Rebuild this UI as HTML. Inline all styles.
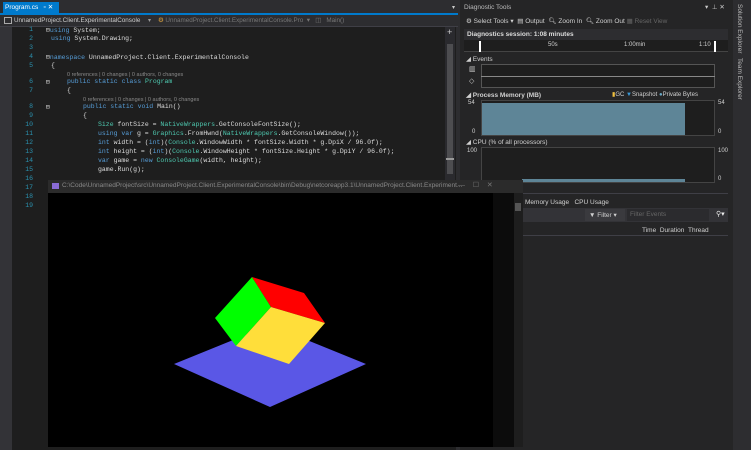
<!DOCTYPE html>
<html><head><style>
*{margin:0;padding:0;box-sizing:border-box}
body{width:751px;height:450px;background:#2d2d30;position:relative;overflow:hidden;font-family:"Liberation Sans",sans-serif;color:#d0d0d0}
.a{position:absolute;white-space:nowrap}
.code{font-family:"Liberation Mono",monospace;font-size:6.5px;color:#dcdcdc}
.ln{font-family:"Liberation Mono",monospace;font-size:6.5px;color:#2b91af;width:12px;text-align:right}
.k{color:#569cd6}.t{color:#4ec9b0}
.lens{font-size:5.5px;color:#8a8a8a}
.s{font-size:7px;color:#d0d0d0}
</style></head><body>
<div class="a" style="left:0;top:0;width:460px;height:14px;background:#2d2d30"></div>
<div class="a" style="left:3px;top:2px;width:56px;height:12px;background:#007acc"></div>
<div class="a s" style="left:5px;top:3px;color:#fff;font-size:6.5px">Program.cs &nbsp; ▫ ✕</div>
<div class="a" style="left:0;top:13px;width:458px;height:2px;background:#007acc"></div>
<div class="a" style="left:452px;top:4px;font-size:6px;color:#ccc">▾</div>
<div class="a" style="left:0;top:15px;width:458px;height:12px;background:#2d2d30;border-bottom:1px solid #3f3f46"></div>
<div class="a" style="left:4px;top:17px;width:8px;height:7px;border:1px solid #aaa"></div>
<div class="a s" style="left:14px;top:17px;font-size:6.3px;color:#ccc">UnnamedProject.Client.ExperimentalConsole</div>
<div class="a s" style="left:148px;top:17px;font-size:6px;color:#999">▾</div>
<div class="a s" style="left:158px;top:17px;font-size:6.3px;color:#777"><span style="color:#d8a040">⚙</span> UnnamedProject.Client.ExperimentalConsole.Pro &nbsp;▾ &nbsp; ◫ &nbsp; Main()</div>
<div class="a" style="left:0;top:27px;width:12px;height:423px;background:#333337"></div>
<div class="a" style="left:12px;top:27px;width:444px;height:423px;background:#1e1e1e"></div>
<div class="a" style="left:445px;top:27px;width:10px;height:165px;background:#2a2a2e"></div>
<div class="a" style="left:447px;top:44px;width:6px;height:130px;background:#4d4d50"></div>
<div class="a" style="left:446px;top:158px;width:8px;height:2px;background:#999"></div>
<div class="a" style="left:447px;top:27px;color:#ccc;font-size:9px">+</div>
<div class="a ln" style="left:21px;top:26px">1</div>
<div class="a ln" style="left:21px;top:35px">2</div>
<div class="a ln" style="left:21px;top:44px">3</div>
<div class="a ln" style="left:21px;top:53px">4</div>
<div class="a ln" style="left:21px;top:62px">5</div>
<div class="a ln" style="left:21px;top:78px">6</div>
<div class="a ln" style="left:21px;top:87px">7</div>
<div class="a ln" style="left:21px;top:103px">8</div>
<div class="a ln" style="left:21px;top:112px">9</div>
<div class="a ln" style="left:21px;top:121px">10</div>
<div class="a ln" style="left:21px;top:130px">11</div>
<div class="a ln" style="left:21px;top:139px">12</div>
<div class="a ln" style="left:21px;top:148px">13</div>
<div class="a ln" style="left:21px;top:157px">14</div>
<div class="a ln" style="left:21px;top:166px">15</div>
<div class="a ln" style="left:21px;top:175px">16</div>
<div class="a ln" style="left:21px;top:184px">17</div>
<div class="a ln" style="left:21px;top:193px">18</div>
<div class="a ln" style="left:21px;top:202px">19</div>
<div class="a code" style="left:46px;top:26px">⊟<span class="k">using</span> System;</div>
<div class="a code" style="left:51px;top:35px"><span class="k">using</span> System.Drawing;</div>
<div class="a code" style="left:46px;top:53px">⊟<span class="k">namespace</span> UnnamedProject.Client.ExperimentalConsole</div>
<div class="a code" style="left:51px;top:62px">{</div>
<div class="a lens" style="left:67px;top:72px">0 references | 0 changes | 0 authors, 0 changes</div>
<div class="a code" style="left:46px;top:78px">⊟</div>
<div class="a code" style="left:67px;top:78px"><span class="k">public static class</span> <span class="t">Program</span></div>
<div class="a code" style="left:67px;top:87px">{</div>
<div class="a lens" style="left:83px;top:97px">0 references | 0 changes | 0 authors, 0 changes</div>
<div class="a code" style="left:46px;top:103px">⊟</div>
<div class="a code" style="left:83px;top:103px"><span class="k">public static void</span> Main()</div>
<div class="a code" style="left:83px;top:112px">{</div>
<div class="a code" style="left:98px;top:121px"><span class="t">Size</span> fontSize = <span class="t">NativeWrappers</span>.GetConsoleFontSize();</div>
<div class="a code" style="left:98px;top:130px"><span class="k">using var</span> g = <span class="t">Graphics</span>.FromHwnd(<span class="t">NativeWrappers</span>.GetConsoleWindow());</div>
<div class="a code" style="left:98px;top:139px"><span class="k">int</span> width = (<span class="k">int</span>)(<span class="t">Console</span>.WindowWidth * fontSize.Width * g.DpiX / 96.0f);</div>
<div class="a code" style="left:98px;top:148px"><span class="k">int</span> height = (<span class="k">int</span>)(<span class="t">Console</span>.WindowHeight * fontSize.Height * g.DpiY / 96.0f);</div>
<div class="a code" style="left:98px;top:157px"><span class="k">var</span> game = <span class="k">new</span> <span class="t">ConsoleGame</span>(width, height);</div>
<div class="a code" style="left:98px;top:166px">game.Run(g);</div>
<div class="a" style="left:460px;top:0;width:273px;height:450px;background:#252526"></div>
<div class="a s" style="left:464px;top:4px;font-size:6.5px;color:#bbb">Diagnostic Tools</div>
<div class="a s" style="left:705px;top:3px;font-size:6.5px;color:#ccc">▾ &nbsp;⊥ ✕</div>
<div class="a s" style="left:466px;top:17px;font-size:6.5px">⚙ Select Tools ▾ &nbsp;<span>▤</span> Output &nbsp;🔍︎ Zoom In &nbsp;🔍︎ Zoom Out <span style="color:#666">▦ Reset View</span></div>
<div class="a" style="left:464px;top:29px;width:264px;height:11px;background:#2d2d30"></div>
<div class="a s" style="left:467px;top:31px;font-size:6.5px;font-weight:bold;color:#ddd">Diagnostics session: 1:08 minutes</div>
<div class="a" style="left:464px;top:40px;width:264px;height:12px;background:#1e1e1e;border-bottom:1px solid #444"></div>
<div class="a" style="left:479px;top:41px;width:2px;height:11px;background:#fff"></div>
<div class="a" style="left:714px;top:41px;width:2px;height:11px;background:#fff"></div>
<div class="a s" style="left:548px;top:42px;font-size:6px">50s</div>
<div class="a s" style="left:624px;top:42px;font-size:6px">1:00min</div>
<div class="a s" style="left:699px;top:42px;font-size:6px">1:10</div>
<div class="a s" style="left:466px;top:55px;font-size:6.5px">◢ Events</div>
<div class="a" style="left:481px;top:64px;width:234px;height:24px;border:1px solid #555;background:#1e1e1e"></div>
<div class="a" style="left:481px;top:76px;width:234px;height:1px;background:#888"></div>
<div class="a s" style="left:469px;top:65px;font-size:7px">▥</div>
<div class="a s" style="left:469px;top:77px;font-size:7px">◇</div>
<div class="a s" style="left:466px;top:91px;font-size:6.5px;font-weight:bold">◢ Process Memory (MB)</div>
<div class="a s" style="left:612px;top:91px;font-size:6px"><span style="color:#f0c040">▮</span>GC <span style="color:#3a9ad9">▼</span>Snapshot <span style="color:#6aa9c6">●</span>Private Bytes</div>
<div class="a" style="left:481px;top:100px;width:234px;height:36px;border:1px solid #444;background:#1e1e1e"></div>
<div class="a" style="left:482px;top:103px;width:203px;height:32px;background:#5e8597"></div>
<div class="a s" style="left:468px;top:100px;font-size:6px">54</div>
<div class="a s" style="left:472px;top:129px;font-size:6px">0</div>
<div class="a s" style="left:718px;top:100px;font-size:6px">54</div>
<div class="a s" style="left:718px;top:129px;font-size:6px">0</div>
<div class="a s" style="left:466px;top:138px;font-size:6.5px">◢ CPU (% of all processors)</div>
<div class="a" style="left:481px;top:147px;width:234px;height:36px;border:1px solid #444;background:#1e1e1e"></div>
<div class="a" style="left:522px;top:179px;width:163px;height:3px;background:#5e8597"></div>
<div class="a s" style="left:467px;top:148px;font-size:6px">100</div>
<div class="a s" style="left:718px;top:148px;font-size:6px">100</div>
<div class="a s" style="left:718px;top:176px;font-size:6px">0</div>
<div class="a" style="left:460px;top:193px;width:268px;height:1px;background:#3f3f46"></div>
<div class="a s" style="left:525px;top:199px;font-size:6.5px">Memory Usage &nbsp; CPU Usage</div>
<div class="a" style="left:523px;top:208px;width:205px;height:14px;background:#333337"></div>
<div class="a" style="left:585px;top:209px;width:40px;height:12px;background:#3a3a3e"></div>
<div class="a s" style="left:589px;top:211px;font-size:6.5px">▼ Filter ▾</div>
<div class="a" style="left:627px;top:209px;width:82px;height:12px;background:#2b2b2e"></div>
<div class="a s" style="left:630px;top:211px;font-size:6.5px;color:#666">Filter Events</div>
<div class="a s" style="left:716px;top:210px;font-size:7px;color:#eee">⚲▾</div>
<div class="a" style="left:523px;top:223px;width:205px;height:13px;border-bottom:1px solid #3f3f46"></div>
<div class="a s" style="left:642px;top:227px;font-size:6.5px">Time &nbsp;Duration &nbsp;Thread</div>
<div class="a" style="left:733px;top:0;width:18px;height:450px;background:#2d2d30"></div>
<div class="a s" style="left:736px;top:4px;writing-mode:vertical-rl;font-size:6.5px;color:#bbb">Solution Explorer</div>
<div class="a s" style="left:736px;top:58px;writing-mode:vertical-rl;font-size:6.5px;color:#bbb">Team Explorer</div>
<div class="a" style="left:48px;top:180px;width:475px;height:13px;background:#2b2b2b"></div>
<div class="a" style="left:52px;top:183px;width:7px;height:6px;background:#8a6bd6"></div>
<div class="a s" style="left:62px;top:182px;font-size:6.5px;color:#888">C:\Code\UnnamedProject\src\UnnamedProject.Client.ExperimentalConsole\bin\Debug\netcoreapp3.1\UnnamedProject.Client.Experiment...</div>
<div class="a s" style="left:458px;top:181px;font-size:7px;color:#777">—&nbsp;&nbsp;&nbsp; ☐ &nbsp;&nbsp;&nbsp;✕</div>
<div class="a" style="left:48px;top:193px;width:475px;height:254px;background:#000"></div>
<div class="a" style="left:493px;top:193px;width:21px;height:254px;background:#0c0c0c"></div>
<div class="a" style="left:514px;top:193px;width:9px;height:254px;background:#1e1e1e"></div>
<div class="a" style="left:515px;top:203px;width:6px;height:8px;background:#555"></div>
<svg class="a" style="left:150px;top:180px" width="360" height="270">
<polygon points="24,184 120,145 216,184 120,227" fill="#5a57e6"/>
<polygon points="65,138 102,97 121,127 86,166" fill="#00ff00"/>
<polygon points="102,97 154,113 175,143 121,127" fill="#ff0000"/>
<polygon points="121,127 175,143 139,184 86,166" fill="#ffde3a"/>
</svg>
</body></html>
